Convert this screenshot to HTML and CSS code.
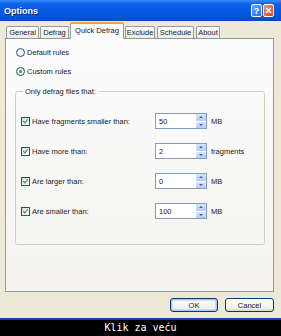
FILE: index.html
```html
<!DOCTYPE html>
<html lang="en">
<head>
  <meta charset="UTF-8" />
  <title>Options</title>
  <link rel="stylesheet" href="styles.css">
</head>
<body>
  <div class="window">
    <div class="titlebar">
      <span class="title">Options</span>
      <div class="title-buttons">
        <span class="tbtn help">?</span>
        <span class="tbtn close">
          <svg width="7" height="7" viewBox="0 0 7 7"><path d="M1 1L6 6M6 1L1 6" stroke="#fff" stroke-width="1.6"/></svg>
        </span>
      </div>
    </div>

    <div class="body">
      <div class="tabs">
        <span class="tab t-general">General</span>
        <span class="tab t-defrag">Defrag</span>
        <span class="tab t-quick active">Quick Defrag</span>
        <span class="tab t-exclude">Exclude</span>
        <span class="tab t-schedule">Schedule</span>
        <span class="tab t-about">About</span>
      </div>

      <div class="panel">
        <label class="radio-row"><span class="radio"></span>Default rules</label>
        <label class="radio-row"><span class="radio on"></span>Custom rules</label>

        <fieldset class="group">
          <legend>Only defrag files that:</legend>
          <div class="rule">
            <span class="check"></span>
            <span class="rule-label">Have fragments smaller than:</span>
            <span class="spin"><span class="spin-val">50</span><span class="spin-btns"><i class="up"></i><i class="down"></i></span></span>
            <span class="unit">MB</span>
          </div>
          <div class="rule">
            <span class="check"></span>
            <span class="rule-label">Have more than:</span>
            <span class="spin"><span class="spin-val">2</span><span class="spin-btns"><i class="up"></i><i class="down"></i></span></span>
            <span class="unit">fragments</span>
          </div>
          <div class="rule">
            <span class="check"></span>
            <span class="rule-label">Are larger than:</span>
            <span class="spin"><span class="spin-val">0</span><span class="spin-btns"><i class="up"></i><i class="down"></i></span></span>
            <span class="unit">MB</span>
          </div>
          <div class="rule">
            <span class="check"></span>
            <span class="rule-label">Are smaller than:</span>
            <span class="spin"><span class="spin-val">100</span><span class="spin-btns"><i class="up"></i><i class="down"></i></span></span>
            <span class="unit">MB</span>
          </div>
        </fieldset>
      </div>

      <div class="buttons">
        <button class="btn default">OK</button>
        <button class="btn">Cancel</button>
      </div>
    </div>
  </div>
  <div class="caption">Klik za veću</div>
</body>
</html>
```

FILE: styles.css
```css
body {
  margin: 0;
  width: 281px;
  height: 336px;
  background: #000;
  font-family: "Liberation Sans", Arial, sans-serif;
  font-size: 7.5px;
  color: #1a1a1a;
  overflow: hidden;
}

.window {
  height: 318px;
  background: #ece9d8;
  border-bottom: 2px solid #0842b6;
  display: flex;
  flex-direction: column;
}

.titlebar {
  height: 21px;
  background: linear-gradient(#3a8cf8 0%, #0c62e8 18%, #0659e2 55%, #0453da 85%, #0246c0 100%);
  display: flex;
  align-items: center;
  justify-content: space-between;
  padding: 0 7px 0 4px;
}

.title {
  color: #fff;
  font-weight: bold;
  font-size: 9px;
  text-shadow: 1px 1px 0 #0a2a80;
}

.title-buttons {
  display: flex;
  gap: 1px;
}

.tbtn {
  width: 11px;
  height: 13px;
  border: 1px solid #fff;
  border-radius: 2px;
  display: flex;
  align-items: center;
  justify-content: center;
  box-sizing: border-box;
  color: #fff;
  font-weight: bold;
  font-size: 9px;
}

.help {
  background: linear-gradient(135deg, #6fa4ff, #2a67e8);
}

.close {
  background: linear-gradient(135deg, #f0906a, #d8431a);
}

.body {
  flex: 1;
  display: flex;
  flex-direction: column;
  padding: 1px 7px 0 5px;
}

.tabs {
  display: flex;
  align-items: flex-end;
  height: 16px;
  padding-left: 1px;
  position: relative;
  z-index: 1;
}

.tab {
  height: 12px;
  box-sizing: border-box;
  border: 1px solid #919b9c;
  border-bottom: none;
  border-radius: 2px 2px 0 0;
  background: linear-gradient(#ffffff, #ecebe5);
  display: flex;
  align-items: center;
  justify-content: center;
  margin-right: 1px;
}

.t-general { width: 33px; }
.t-defrag { width: 29px; }
.t-quick { width: 54px; }
.t-exclude { width: 30px; }
.t-schedule { width: 37px; margin-left: 1px; }
.t-about { width: 24px; margin-left: 1px; }

.tab.active {
  height: 17px;
  margin-bottom: -1px;
  background: #fcfcfe;
  border-top: 2px solid #f3a43a;
  padding-bottom: 3px;
}

.panel {
  height: 254px;
  box-sizing: border-box;
  border: 1px solid #919b9c;
  background: linear-gradient(#fcfcfe, #f4f3ee);
  padding: 4px 8px 0 9px;
}

.radio-row {
  display: flex;
  align-items: center;
  height: 19px;
  padding-left: 1px;
}

.radio {
  width: 7px;
  height: 7px;
  border: 1px solid #1c5180;
  border-radius: 50%;
  background: radial-gradient(#ffffff 40%, #e0ded4);
  margin-right: 2px;
  display: flex;
  align-items: center;
  justify-content: center;
}

.radio.on::after {
  content: "";
  width: 3px;
  height: 3px;
  border-radius: 50%;
  background: #29a329;
}

.group {
  margin: 6px 0 0 0;
  padding: 10px 0 18px 5px;
  border: 1px solid #d0d0bf;
  border-radius: 3px;
}

.group legend {
  padding: 0 2px;
  margin-left: 2px;
  line-height: 9px;
}

.rule {
  display: flex;
  align-items: center;
  height: 30px;
}

.check {
  width: 9px;
  height: 9px;
  box-sizing: border-box;
  border: 1px solid #1c5180;
  background: linear-gradient(135deg, #dcdcd4, #ffffff);
  position: relative;
  margin-right: 2px;
}

.check::after {
  content: "";
  position: absolute;
  left: 2px;
  top: 0px;
  width: 2px;
  height: 4px;
  border: solid #21a121;
  border-width: 0 1.5px 1.5px 0;
  transform: rotate(40deg);
}

.rule-label {
  width: 123px;
}

.spin {
  display: flex;
  height: 16px;
  box-sizing: border-box;
  border: 1px solid #7f9db9;
  background: #fff;
}

.spin-val {
  width: 39px;
  padding-left: 3px;
  display: flex;
  align-items: center;
  box-sizing: border-box;
}

.spin-btns {
  width: 10px;
  display: flex;
  flex-direction: column;
  gap: 1px;
  padding: 0 0 0 1px;
  background: #fff;
}

.spin-btns i {
  flex: 1;
  background: linear-gradient(#d9e5fd, #b4cbf8);
  border-radius: 1px;
  display: flex;
  align-items: center;
  justify-content: center;
}

.spin-btns i::after {
  content: "";
  border-left: 2px solid transparent;
  border-right: 2px solid transparent;
}

.spin-btns .up::after {
  border-bottom: 2px solid #4d6185;
}

.spin-btns .down::after {
  border-top: 2px solid #4d6185;
}

.unit {
  margin-left: 4px;
}

.buttons {
  display: flex;
  justify-content: flex-end;
  gap: 7px;
  margin-top: 6px;
}

.btn {
  height: 14px;
  border: 1px solid #003c74;
  border-radius: 3px;
  background: linear-gradient(#ffffff, #f0f0ea 80%, #d6d0c5);
  font-family: "Liberation Sans", Arial, sans-serif;
  font-size: 7.5px;
  color: #1a1a1a;
  padding: 0;
  width: 49px;
}

.btn.default {
  width: 48px;
  box-shadow: inset 0 0 0 1px #a8c4f0, inset 0 0 0 2px #cfe0fb;
}

.caption {
  height: 16px;
  color: #fff;
  text-align: center;
  font-family: "DejaVu Sans Mono", "Liberation Mono", monospace;
  font-size: 10px;
  line-height: 16px;
}
```
